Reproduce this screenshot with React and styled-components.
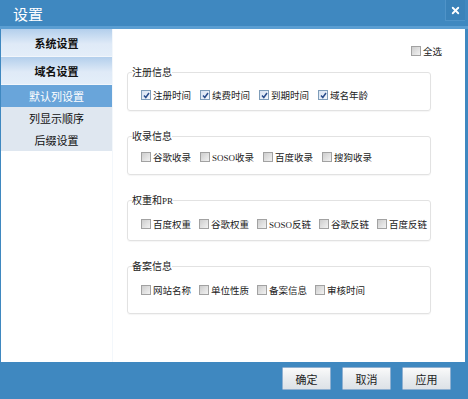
import React from "react";
import styled, { createGlobalStyle } from "styled-components";
import { X } from "lucide-react";

const GlobalStyle = createGlobalStyle`
  html, body {
    margin: 0;
    padding: 0;
    background: #3f88c0;
  }
  body {
    font-family: "Noto Sans CJK SC", "Liberation Sans", sans-serif;
  }
`;

const Dialog = styled.div`
  width: 468px;
  height: 399px;
  display: flex;
  flex-direction: column;
  background: #3f88c0;
`;

const TitleBar = styled.div`
  height: 26px;
  display: flex;
  align-items: center;
  justify-content: space-between;
  padding-left: 13px;
  border-bottom: 3px solid #5b9ed2;
  color: #fff;
  font-size: 15px;
`;

const CloseButton = styled.div`
  width: 19px;
  height: 20px;
  margin-right: 3px;
  align-self: flex-start;
  display: flex;
  align-items: center;
  justify-content: center;
  background: #3a82b9;
  border-left: 1px solid #4f93c8;
  border-bottom: 1px solid #4f93c8;
  color: #fff;
`;

const Body = styled.div`
  height: 333px;
  display: flex;
  margin-left: 1px;
  margin-right: 3px;
  background: #fff;
`;

const Sidebar = styled.div`
  width: 111px;
  display: flex;
  flex-direction: column;
  border-right: 1px solid #f3f7fb;
`;

const SideHeader = styled.div`
  height: 28px;
  display: flex;
  align-items: center;
  justify-content: center;
  font-size: 11px;
  font-weight: bold;
  color: #111;
  background: linear-gradient(#b3cfec, #dfeaf7 55%, #e4eef9);
  border-bottom: 1px solid #f2f6fb;
  box-sizing: border-box;
`;

const SideItem = styled.div`
  height: 22px;
  display: flex;
  align-items: center;
  justify-content: center;
  font-size: 11px;
  color: ${(p) => (p.$active ? "#fff" : "#111")};
  background: ${(p) => (p.$active ? "#69a5da" : "#dfe7f0")};
`;

const Content = styled.div`
  flex: 1;
  display: flex;
  flex-direction: column;
  padding: 16px 0 0 14px;
`;

const SelectAllRow = styled.div`
  display: flex;
  justify-content: flex-end;
  padding-right: 23px;
  margin-bottom: 9px;
`;

const Group = styled.fieldset`
  width: 304px;
  box-sizing: border-box;
  margin: 0 0 19px 0;
  padding: 0;
  min-width: 0;
  border: 1px solid #e2e2e2;
  border-radius: 3px;
  box-shadow: 0 1px 1px rgba(0, 0, 0, 0.04);
`;

const Legend = styled.legend`
  margin-left: 4px;
  padding: 0;
  font-size: 10px;
  line-height: 12px;
  color: #222;
`;

const Row = styled.div`
  display: flex;
  gap: ${(p) => p.$gap || 9}px;
  padding: ${(p) => p.$pt || 11}px 0 ${(p) => p.$pb || 9}px 13px;
`;

const Option = styled.label`
  display: flex;
  align-items: center;
  gap: 2px;
  height: 12px;
  font-size: 9.5px;
  line-height: 12px;
  color: #222;
  white-space: nowrap;
`;

const Box = styled.span`
  width: 8px;
  height: 8px;
  flex: none;
  display: flex;
  align-items: center;
  justify-content: center;
  border: 1px solid ${(p) => (p.$checked ? "#7f9db9" : "#a2a2a2")};
  background: ${(p) =>
    p.$checked
      ? "linear-gradient(135deg, #d6e2f2, #f5f8fc)"
      : "linear-gradient(135deg, #cdcdcd, #f2f2f2)"};
`;

const Latin = styled.span`
  font-family: "Liberation Serif", serif;
  font-size: 9px;
`;

const Footer = styled.div`
  flex: 1;
  display: flex;
  justify-content: flex-end;
  align-items: flex-start;
  gap: 11px;
  padding: 5px 17px 0 0;
`;

const Button = styled.button`
  width: 49px;
  height: 23px;
  padding: 0;
  font-family: "Noto Sans CJK SC", sans-serif;
  font-size: 11px;
  color: #222;
  border: 1px solid #8fb0d1;
  border-radius: 1px;
  background: linear-gradient(#fafafa, #e9ecef 50%, #dde2e7);
`;

const CheckBox = ({ checked, children }) => (
  <Option>
    <Box $checked={checked}>
      {checked && (
        <svg width="7" height="7" viewBox="0 0 7 7">
          <polyline
            points="1,3.5 2.8,5.5 6,1"
            fill="none"
            stroke="#2a4e8c"
            strokeWidth="1.5"
          />
        </svg>
      )}
    </Box>
    <span>{children}</span>
  </Option>
);

const App = () => (
  <Dialog>
    <GlobalStyle />
    <TitleBar>
      <span>设置</span>
      <CloseButton>
        <X size={11} strokeWidth={4} />
      </CloseButton>
    </TitleBar>
    <Body>
      <Sidebar>
        <SideHeader>系统设置</SideHeader>
        <SideHeader>域名设置</SideHeader>
        <SideItem $active>默认列设置</SideItem>
        <SideItem>列显示顺序</SideItem>
        <SideItem>后缀设置</SideItem>
      </Sidebar>
      <Content>
        <SelectAllRow>
          <CheckBox>全选</CheckBox>
        </SelectAllRow>

        <Group>
          <Legend>注册信息</Legend>
          <Row $pt={11} $pb={9}>
            <CheckBox checked>注册时间</CheckBox>
            <CheckBox checked>续费时间</CheckBox>
            <CheckBox checked>到期时间</CheckBox>
            <CheckBox checked>域名年龄</CheckBox>
          </Row>
        </Group>

        <Group>
          <Legend>收录信息</Legend>
          <Row $pt={9} $pb={11}>
            <CheckBox>谷歌收录</CheckBox>
            <CheckBox>
              <Latin>SOSO</Latin>收录
            </CheckBox>
            <CheckBox>百度收录</CheckBox>
            <CheckBox>搜狗收录</CheckBox>
          </Row>
        </Group>

        <Group>
          <Legend>
            权重和<Latin>PR</Latin>
          </Legend>
          <Row $pt={11} $pb={10} $gap={8}>
            <CheckBox>百度权重</CheckBox>
            <CheckBox>谷歌权重</CheckBox>
            <CheckBox>
              <Latin>SOSO</Latin>反链
            </CheckBox>
            <CheckBox>谷歌反链</CheckBox>
            <CheckBox>百度反链</CheckBox>
          </Row>
        </Group>

        <Group>
          <Legend>备案信息</Legend>
          <Row $pt={12} $pb={17} $gap={8}>
            <CheckBox>网站名称</CheckBox>
            <CheckBox>单位性质</CheckBox>
            <CheckBox>备案信息</CheckBox>
            <CheckBox>审核时间</CheckBox>
          </Row>
        </Group>
      </Content>
    </Body>
    <Footer>
      <Button>确定</Button>
      <Button>取消</Button>
      <Button>应用</Button>
    </Footer>
  </Dialog>
);

export default App;
